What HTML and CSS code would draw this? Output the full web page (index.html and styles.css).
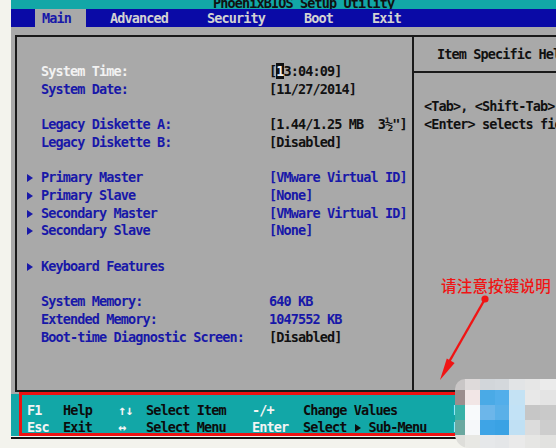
FILE: index.html
```html
<!DOCTYPE html>
<html lang="en">
<head>
<meta charset="utf-8">
<title>PhoenixBIOS Setup Utility</title>
<link rel="stylesheet" href="styles.css">
</head>
<body>
<div class="page">
  <div class="margin-strip"></div>
  <div class="screen">
    <header class="title-bar"><span class="title">PhoenixBIOS Setup Utility</span></header>
    <nav class="menu-bar">
      <span class="tab active">Main</span>
      <span class="tab">Advanced</span>
      <span class="tab">Security</span>
      <span class="tab">Boot</span>
      <span class="tab">Exit</span>
    </nav>
    <main class="work-area">
      <div class="frame">
        <section class="settings">
          <div class="row"><span class="mark"></span><span class="label current">System Time:</span><span class="value">[<span class="cursor">1</span>3:04:09]</span></div>
          <div class="row"><span class="mark"></span><span class="label">System Date:</span><span class="value">[11/27/2014]</span></div>
          <div class="row"></div>
          <div class="row"><span class="mark"></span><span class="label">Legacy Diskette A:</span><span class="value">[1.44/1.25 MB  3½"]</span></div>
          <div class="row"><span class="mark"></span><span class="label">Legacy Diskette B:</span><span class="value">[Disabled]</span></div>
          <div class="row"></div>
          <div class="row"><span class="mark"><i class="arrow"></i></span><span class="label">Primary Master</span><span class="value info">[VMware Virtual ID]</span></div>
          <div class="row"><span class="mark"><i class="arrow"></i></span><span class="label">Primary Slave</span><span class="value info">[None]</span></div>
          <div class="row"><span class="mark"><i class="arrow"></i></span><span class="label">Secondary Master</span><span class="value info">[VMware Virtual ID]</span></div>
          <div class="row"><span class="mark"><i class="arrow"></i></span><span class="label">Secondary Slave</span><span class="value info">[None]</span></div>
          <div class="row"></div>
          <div class="row"><span class="mark"><i class="arrow"></i></span><span class="label">Keyboard Features</span><span class="value"></span></div>
          <div class="row"></div>
          <div class="row"><span class="mark"></span><span class="label">System Memory:</span><span class="value info">640 KB</span></div>
          <div class="row"><span class="mark"></span><span class="label">Extended Memory:</span><span class="value info">1047552 KB</span></div>
          <div class="row"><span class="mark"></span><span class="label">Boot-time Diagnostic Screen:</span><span class="value">[Disabled]</span></div>
        </section>
        <aside class="help">
          <div class="help-title">Item Specific Help</div>
          <div class="help-body">
            <div>&lt;Tab&gt;, &lt;Shift-Tab&gt;, or</div>
            <div>&lt;Enter&gt; selects field.</div>
          </div>
        </aside>
      </div>
    </main>
    <footer class="key-bar">
      <span class="key">F1</span><span class="desc">Help</span><span class="key">↑↓</span><span class="desc">Select Item</span><span class="key">-/+</span><span class="desc">Change Values</span><span class="key">F9</span>
      <span class="key">Esc</span><span class="desc">Exit</span><span class="key">↔</span><span class="desc">Select Menu</span><span class="key">Enter</span><span class="desc">Select <i class="tri"></i> Sub-Menu</span><span class="key">F10</span>
    </footer>
    <div class="bottom-rule"></div>
  </div>
</div>

<div class="callout-box"></div>
<svg class="callout-arrow" width="556" height="448" viewBox="0 0 556 448">
  <line x1="485" y1="299" x2="449" y2="362" stroke="#f01414" stroke-width="2.4"/>
  <circle cx="485" cy="299" r="3.6" fill="#f01414"/>
  <polygon points="440,380 454.6,363 446.8,358.6" fill="#f01414"/>
</svg>
<div class="callout-label">请注意按键说明</div>

<div class="mosaic">
  <i></i><i></i><i></i><i></i><i></i><i></i><i></i>
  <i></i><i></i><i></i><i></i><i></i><i></i><i></i>
  <i></i><i></i><i></i><i></i><i></i><i></i><i></i>
  <i></i><i></i><i></i><i></i><i></i><i></i><i></i>
  <i></i><i></i><i></i><i></i><i></i><i></i><i></i>
</div>
</body>
</html>
```

FILE: styles.css
```css
* { box-sizing: border-box; }

html, body { margin: 0; padding: 0; }

body {
  width: 556px;
  height: 448px;
  overflow: hidden;
  position: relative;
  background: #f3f3ed;
  font-family: "DejaVu Sans Mono", "Liberation Mono", monospace;
  font-weight: bold;
  font-size: 13.5px;
  letter-spacing: -0.88px;
  color: #111;
}

.page { display: flex; height: 448px; }
.margin-strip { width: 11px; flex: none; }

.screen {
  width: 545px;
  flex: none;
  display: flex;
  flex-direction: column;
  overflow: hidden;
  white-space: nowrap;
}

/* top caption strip */
.title-bar {
  height: 9px;
  flex: none;
  background: #12a7a7;
  overflow: hidden;
  padding-left: 202px;
  line-height: 7px;
  color: #101010;
}

/* menu tabs */
.menu-bar {
  height: 18px;
  flex: none;
  background: #0a0aa6;
  display: flex;
  gap: 17px;
  padding-left: 24px;
  line-height: 18px;
}
.tab { padding: 0 15px 0 7px; color: #d2d2d2; }
.tab.active { background: #a9a9a9; color: #1818a8; }

/* main panel */
.work-area {
  height: 367px;
  flex: none;
  background: #a9a9a9;
  padding: 8px 0 2px 4px;
}
.frame {
  height: 100%;
  display: flex;
  border: 2px solid #1a1a1a;
  border-right: none;
}

.settings {
  width: 397px;
  flex: none;
  border-right: 2px solid #1a1a1a;
  padding: 26px 0 0 10px;
}
.row {
  display: grid;
  grid-template-columns: 14px 228px auto;
  height: 17.73px;
  align-items: center;
  line-height: 17.73px;
}
.mark { display: flex; align-items: center; }
.arrow {
  display: block;
  width: 0;
  height: 0;
  border-left: 6px solid #1818a8;
  border-top: 4px solid transparent;
  border-bottom: 4px solid transparent;
}
.label { color: #1818a8; }
.label.current { color: #f2f2f2; }
.value { color: #111; white-space: pre; }
.value.info { color: #1818a8; }
.cursor { background: #111; color: #eee; }

.help {
  flex: 1;
  overflow: hidden;
  color: #111;
}
.help-title {
  height: 36px;
  line-height: 34px;
  padding-left: 23px;
  border-bottom: 2px solid #1a1a1a;
}
.help-body {
  padding: 25px 0 0 10px;
  line-height: 17.73px;
}

/* key legend */
.key-bar {
  height: 42px;
  flex: none;
  background: #12a7a7;
  padding: 8px 0 0 16px;
  display: grid;
  grid-template-columns: 36px 55px 28px 106px 51px 150px auto;
  grid-auto-rows: 17px;
  line-height: 17px;
}
.key { color: #f4f4f4; }
.desc { color: #0c0c0c; }
.tri {
  display: inline-block;
  width: 0;
  height: 0;
  margin: 0 0.5px 0 1px;
  border-left: 6px solid #0c0c0c;
  border-top: 4px solid transparent;
  border-bottom: 4px solid transparent;
  vertical-align: 0;
}

.bottom-rule {
  height: 2px;
  flex: none;
  margin-top: 1px;
  background: #141414;
}

/* red annotation over the key legend */
.callout-box {
  position: absolute;
  left: 19px;
  top: 392px;
  width: 460px;
  height: 44px;
  border: 3px solid #ee1212;
}
.callout-arrow {
  position: absolute;
  left: 0;
  top: 0;
}
.callout-label {
  position: absolute;
  left: 441px;
  top: 275px;
  font-family: "Noto Sans CJK SC", sans-serif;
  font-weight: 500;
  font-size: 15.5px;
  letter-spacing: 0.2px;
  line-height: 20px;
  color: #f01414;
  white-space: nowrap;
}

/* pixelated watermark patch */
.mosaic {
  position: absolute;
  left: 455px;
  top: 379px;
  width: 101px;
  height: 69px;
  display: grid;
  grid-template-columns: 10px 15px 15px 14px 16px 15px 16px;
  grid-template-rows: 11px 15px 15px 15px 13px;
  border-radius: 10px 0 0 14px;
  overflow: hidden;
}
.mosaic i { display: block; }
.mosaic i:nth-child(1) { background: #c9c6c6; }
.mosaic i:nth-child(2) { background: #dedada; }
.mosaic i:nth-child(3) { background: #d2d6da; }
.mosaic i:nth-child(4) { background: #d4d8dc; }
.mosaic i:nth-child(5) { background: #e2e4e6; }
.mosaic i:nth-child(6) { background: #e6e6e6; }
.mosaic i:nth-child(7) { background: #ebebeb; }
.mosaic i:nth-child(8) { background: #9c8e8e; }
.mosaic i:nth-child(9) { background: #f2e6e6; }
.mosaic i:nth-child(10) { background: #4aaae6; }
.mosaic i:nth-child(11) { background: #52aeea; }
.mosaic i:nth-child(12) { background: #c4e2f4; }
.mosaic i:nth-child(13) { background: #e8e8e8; }
.mosaic i:nth-child(14) { background: #e4e4e4; }
.mosaic i:nth-child(15) { background: #38b2a8; }
.mosaic i:nth-child(16) { background: #f8fafc; }
.mosaic i:nth-child(17) { background: #6cb6ea; }
.mosaic i:nth-child(18) { background: #5ab0e8; }
.mosaic i:nth-child(19) { background: #c2e2f6; }
.mosaic i:nth-child(20) { background: #c6c6c6; }
.mosaic i:nth-child(21) { background: #c9c9c9; }
.mosaic i:nth-child(22) { background: #6aa8a0; }
.mosaic i:nth-child(23) { background: #f6f8fa; }
.mosaic i:nth-child(24) { background: #3ea4e6; }
.mosaic i:nth-child(25) { background: #3aa2e4; }
.mosaic i:nth-child(26) { background: #c0e0f4; }
.mosaic i:nth-child(27) { background: #dcdcdc; }
.mosaic i:nth-child(28) { background: #cdcdcd; }
.mosaic i:nth-child(29) { background: #dededa; }
.mosaic i:nth-child(30) { background: #e8e8e4; }
.mosaic i:nth-child(31) { background: #e6e8ea; }
.mosaic i:nth-child(32) { background: #e4e6e8; }
.mosaic i:nth-child(33) { background: #eaeaea; }
.mosaic i:nth-child(34) { background: #e6e6e4; }
.mosaic i:nth-child(35) { background: #e2e2e0; }
```
